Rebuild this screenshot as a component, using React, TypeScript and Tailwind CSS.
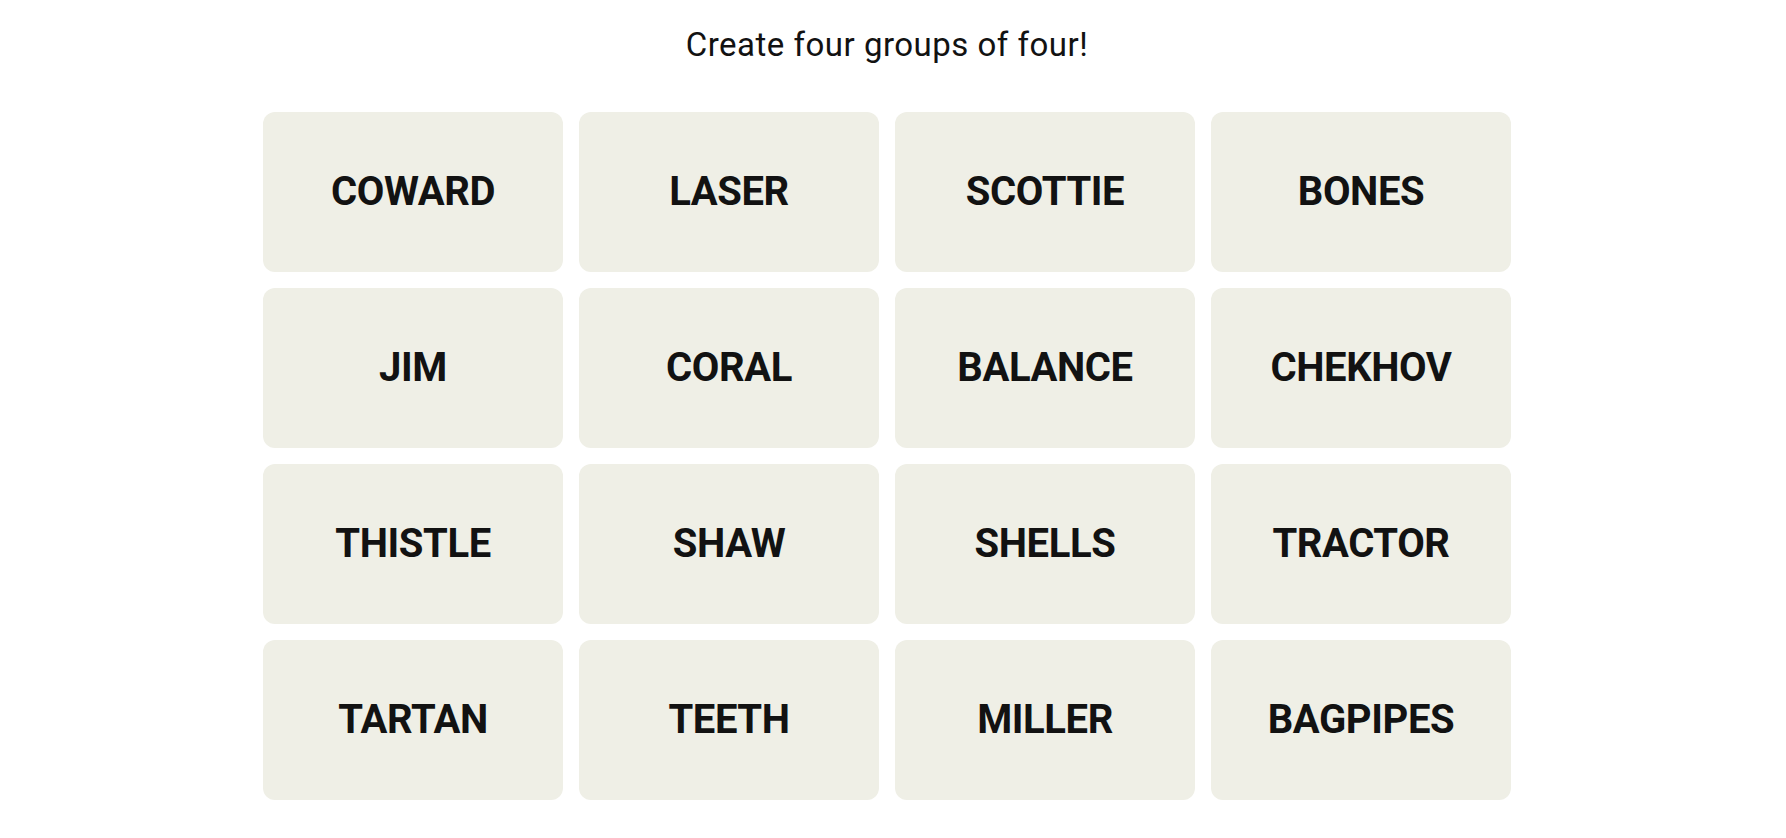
const words = [
  'COWARD', 'LASER', 'SCOTTIE', 'BONES',
  'JIM', 'CORAL', 'BALANCE', 'CHEKHOV',
  'THISTLE', 'SHAW', 'SHELLS', 'TRACTOR',
  'TARTAN', 'TEETH', 'MILLER', 'BAGPIPES',
];

function Tile({ word }: { word: string }) {
  return (
    <button
      type="button"
      className="h-[160px] rounded-xl bg-[#efefe6] flex items-center justify-center text-[40px] leading-[40px] font-bold tracking-[-0.4px] text-[#121212] uppercase"
    >
      {word}
    </button>
  );
}

export default function App() {
  return (
    <div className="min-h-screen bg-white font-['Roboto',sans-serif]">
      <div className="w-[1774px] pt-[28px]">
        <p className="text-center text-[33px] leading-[33px] tracking-[0.5px] text-[#121212] mb-[51px]">
          Create four groups of four!
        </p>
        <div className="w-[1248px] mx-auto grid grid-cols-4 gap-4">
          {words.map((w) => (
            <Tile key={w} word={w} />
          ))}
        </div>
      </div>
    </div>
  );
}
